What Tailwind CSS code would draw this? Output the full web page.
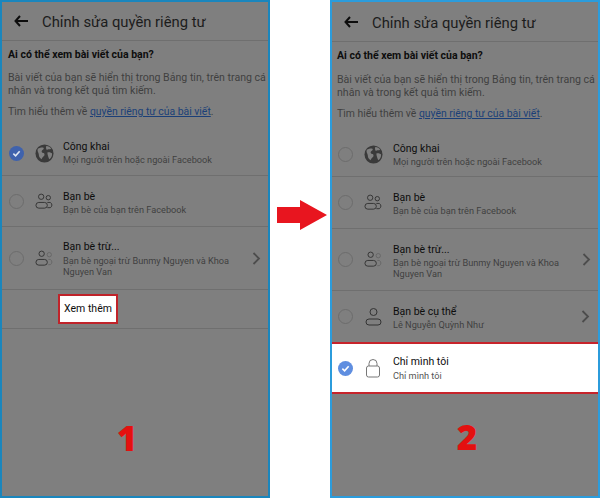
<!DOCTYPE html>
<html lang="vi">
<head>
  <meta charset="UTF-8" />
  <title>Chỉnh sửa quyền riêng tư</title>
  <script src="https://cdn.jsdelivr.net/npm/@tailwindcss/browser@4"></script>
</head>
<body class="bg-white font-['Roboto',sans-serif] overflow-hidden">
  <div class="flex w-[600px] h-[498px]">

    <!-- left phone -->
    <div class="w-[270px] h-[498px] shrink-0 flex flex-col bg-[#7f7f7f] border-2 border-[#1a86bd] text-[#0d0d0d]">
      <div class="h-[39px] shrink-0 flex items-center pl-[12px] border-b border-[#6f6f6f]">
        <svg class="w-[14px] h-[12px]" viewBox="0 0 14 12"><path d="M6 1 1.500 6 6 11M2 6h12" fill="none" stroke="#0d0d0d" stroke-width="2"/></svg>
        <span class="ml-[14px] pt-[2px] text-[14.800px] leading-none text-[#1c1c1c]">Chỉnh sửa quyền riêng tư</span>
      </div>
      <div class="pl-[6px] pt-[7px] h-[87px] shrink-0">
        <p class="text-[10.500px] leading-[14px] font-bold">Ai có thể xem bài viết của bạn?</p>
        <p class="mt-[9px] text-[10.600px] leading-[13px] text-[#3f3f3f]">Bài viết của bạn sẽ hiển thị trong Bảng tin, trên trang cá nhân và trong kết quả tìm kiếm.</p>
        <p class="mt-[8px] text-[10.400px] leading-[13px] text-[#3f3f3f]">Tìm hiểu thêm về <span class="underline text-[#1b3f78]">quyền riêng tư của bài viết</span>.</p>
      </div>
      <div class="h-[48px] shrink-0 flex items-center border-b border-[#6f6f6f] pt-[3px]">
        <div class="ml-[7px] w-[15px] h-[15px] rounded-full bg-[#3f62ad] flex items-center justify-center">
          <svg class="w-[9px] h-[9px]" viewBox="0 0 10 10"><path d="M1.500 5.200 4 7.500 8.500 2.500" fill="none" stroke="#dfe6f2" stroke-width="1.800"/></svg>
        </div>
        <svg class="ml-[11px] w-[19px] h-[19px]" viewBox="0 0 20 20"><circle cx="10" cy="10" r="9.500" fill="#3a3a3a"/><path d="M3 5c2-1 4-2 6-1 1 2-2 2-2 4s3 1 3 3-2 2-3 5c-2-1-3-3-3-5S2 8 3 5ZM12 2c2 0 4 1 5 3-1 1-3 0-4 1s-2-3-1-4ZM13 9c2-1 4 0 5 1 0 3-1 5-3 6-1-2-2-5-2-7Z" fill="#7f7f7f"/></svg>
        <div class="ml-[9px]">
          <p class="text-[10.500px] leading-[13px]">Công khai</p>
          <p class="text-[9.200px] leading-[13px] text-[#3f3f3f]">Mọi người trên hoặc ngoài Facebook</p>
        </div>
      </div>
      <div class="h-[51px] shrink-0 flex items-center border-b border-[#6f6f6f]">
        <div class="ml-[7px] w-[15px] h-[15px] rounded-full border border-[#6c6c6c]"></div>
        <svg class="ml-[11px] w-[19px] h-[19px]" viewBox="0 0 20 20" fill="none" stroke="#333" stroke-width="1"><circle cx="6.500" cy="5" r="2.800"/><circle cx="14" cy="6" r="2.300"/><rect x="1" y="11" width="12" height="6" rx="3"/><path d="M13 11h3a3 3 0 0 1 0 5.500h-3"/></svg>
        <div class="ml-[9px] pt-[3px]">
          <p class="text-[10.500px] leading-[13px]">Bạn bè</p>
          <p class="text-[9.200px] leading-[13px] text-[#3f3f3f]">Bạn bè của bạn trên Facebook</p>
        </div>
      </div>
      <div class="h-[63px] shrink-0 flex items-center border-b border-[#6f6f6f]">
        <div class="ml-[7px] w-[15px] h-[15px] rounded-full border border-[#6c6c6c]"></div>
        <svg class="ml-[11px] w-[19px] h-[19px]" viewBox="0 0 20 20" fill="none" stroke="#333" stroke-width="1"><circle cx="7" cy="5" r="2.800"/><rect x="1" y="11" width="12" height="6" rx="3"/><g stroke="#666"><circle cx="15" cy="6" r="2.300"/><path d="M14 11h2a3 3 0 0 1 0 5.500h-2"/></g></svg>
        <div class="ml-[9px] w-[188px] shrink-0 pt-[1px]">
          <p class="text-[10.500px] leading-[13px]">Bạn bè trừ...</p>
          <p class="text-[9.200px] leading-[11px] text-[#3f3f3f] mt-[2px]">Bạn bè ngoại trừ Bunmy Nguyen và Khoa Nguyen Van</p>
        </div>
        <svg class="ml-[1px] w-[9px] h-[13px]" viewBox="0 0 9 13"><path d="M1.500 1 7 6.500 1.500 12" fill="none" stroke="#4d4d4d" stroke-width="1.800"/></svg>
      </div>
      <div class="h-[39px] shrink-0 flex items-center border-b border-[#6f6f6f] pl-[56px]">
        <div class="w-[60px] h-[30px] bg-white border-2 border-[#c0232a] flex items-center justify-center text-[10.500px]">Xem thêm</div>
      </div>
      <div class="flex-1 flex justify-center pt-[91px]">
        <span class="text-[#e4100f] text-[35px] leading-[36px] font-extrabold font-['Open_Sans',sans-serif] ml-[-16px]">1</span>
      </div>
    </div>

    <!-- arrow between -->
    <div class="w-[60px] shrink-0 flex items-start pt-[200px] pl-[7px]">
      <svg class="w-[50px] h-[30px]" viewBox="0 0 50 30"><path d="M0 7h23V0l27 15-27 15V23H0Z" fill="#e8151f"/></svg>
    </div>

    <!-- right phone -->
    <div class="w-[270px] h-[498px] shrink-0 flex flex-col bg-[#7f7f7f] border-2 border-[#2b9cdc] text-[#0d0d0d]">
      <div class="h-[40px] shrink-0 flex items-center pl-[12px] border-b border-[#6f6f6f]">
        <svg class="w-[14px] h-[12px]" viewBox="0 0 14 12"><path d="M6 1 1.500 6 6 11M2 6h12" fill="none" stroke="#0d0d0d" stroke-width="2"/></svg>
        <span class="ml-[14px] pt-[3px] text-[14.800px] leading-none text-[#1c1c1c]">Chỉnh sửa quyền riêng tư</span>
      </div>
      <div class="pl-[5px] pt-[7px] h-[88px] shrink-0">
        <p class="text-[10.500px] leading-[14px] font-bold">Ai có thể xem bài viết của bạn?</p>
        <p class="mt-[10px] text-[10.600px] leading-[13px] text-[#3f3f3f]">Bài viết của bạn sẽ hiển thị trong Bảng tin, trên trang cá nhân và trong kết quả tìm kiếm.</p>
        <p class="mt-[8px] text-[10.400px] leading-[13px] text-[#3f3f3f]">Tìm hiểu thêm về <span class="underline text-[#1b3f78]">quyền riêng tư của bài viết</span>.</p>
      </div>
      <div class="h-[47px] shrink-0 flex items-center border-b border-[#6f6f6f] pt-[3px]">
        <div class="ml-[6px] w-[15px] h-[15px] rounded-full border border-[#6c6c6c]"></div>
        <svg class="ml-[11px] w-[19px] h-[19px]" viewBox="0 0 20 20"><circle cx="10" cy="10" r="9.500" fill="#3a3a3a"/><path d="M3 5c2-1 4-2 6-1 1 2-2 2-2 4s3 1 3 3-2 2-3 5c-2-1-3-3-3-5S2 8 3 5ZM12 2c2 0 4 1 5 3-1 1-3 0-4 1s-2-3-1-4ZM13 9c2-1 4 0 5 1 0 3-1 5-3 6-1-2-2-5-2-7Z" fill="#7f7f7f"/></svg>
        <div class="ml-[10px]">
          <p class="text-[10.500px] leading-[13px]">Công khai</p>
          <p class="text-[9.200px] leading-[13px] text-[#3f3f3f]">Mọi người trên hoặc ngoài Facebook</p>
        </div>
      </div>
      <div class="h-[52px] shrink-0 flex items-center border-b border-[#6f6f6f]">
        <div class="ml-[6px] w-[15px] h-[15px] rounded-full border border-[#6c6c6c]"></div>
        <svg class="ml-[11px] w-[19px] h-[19px]" viewBox="0 0 20 20" fill="none" stroke="#333" stroke-width="1"><circle cx="6.500" cy="5" r="2.800"/><circle cx="14" cy="6" r="2.300"/><rect x="1" y="11" width="12" height="6" rx="3"/><path d="M13 11h3a3 3 0 0 1 0 5.500h-3"/></svg>
        <div class="ml-[10px] pt-[3px]">
          <p class="text-[10.500px] leading-[13px]">Bạn bè</p>
          <p class="text-[9.200px] leading-[13px] text-[#3f3f3f]">Bạn bè của bạn trên Facebook</p>
        </div>
      </div>
      <div class="h-[62px] shrink-0 flex items-center border-b border-[#6f6f6f]">
        <div class="ml-[6px] w-[15px] h-[15px] rounded-full border border-[#6c6c6c]"></div>
        <svg class="ml-[11px] w-[19px] h-[19px]" viewBox="0 0 20 20" fill="none" stroke="#333" stroke-width="1"><circle cx="7" cy="5" r="2.800"/><rect x="1" y="11" width="12" height="6" rx="3"/><g stroke="#666"><circle cx="15" cy="6" r="2.300"/><path d="M14 11h2a3 3 0 0 1 0 5.500h-2"/></g></svg>
        <div class="ml-[10px] w-[188px] shrink-0 pt-[2px]">
          <p class="text-[10.500px] leading-[13px]">Bạn bè trừ...</p>
          <p class="text-[9.200px] leading-[11px] text-[#3f3f3f] mt-[1px]">Bạn bè ngoại trừ Bunmy Nguyen và Khoa Nguyen Van</p>
        </div>
        <svg class="ml-[1px] w-[9px] h-[13px]" viewBox="0 0 9 13"><path d="M1.500 1 7 6.500 1.500 12" fill="none" stroke="#4d4d4d" stroke-width="1.800"/></svg>
      </div>
      <div class="h-[51px] shrink-0 flex items-center">
        <div class="ml-[6px] w-[15px] h-[15px] rounded-full border border-[#6c6c6c]"></div>
        <svg class="ml-[12px] w-[17px] h-[19px]" viewBox="0 0 17 19" fill="none" stroke="#333" stroke-width="1"><circle cx="8.500" cy="5" r="3.500"/><rect x="1" y="12" width="15" height="6" rx="3"/></svg>
        <div class="ml-[11px] w-[187px] shrink-0 pt-[2px]">
          <p class="text-[10.500px] leading-[13px]">Bạn bè cụ thể</p>
          <p class="text-[9.200px] leading-[13px] text-[#3f3f3f]">Lê Nguyễn Quỳnh Như</p>
        </div>
        <svg class="ml-[1px] w-[9px] h-[13px]" viewBox="0 0 9 13"><path d="M1.500 1 7 6.500 1.500 12" fill="none" stroke="#4d4d4d" stroke-width="1.800"/></svg>
      </div>
      <div class="h-[52px] shrink-0 flex items-center bg-white border-y-2 border-[#c7242b]">
        <div class="ml-[6px] w-[15px] h-[15px] rounded-full bg-[#5f8ee0] flex items-center justify-center">
          <svg class="w-[9px] h-[9px]" viewBox="0 0 10 10"><path d="M1.500 5.200 4 7.500 8.500 2.500" fill="none" stroke="#fff" stroke-width="1.800"/></svg>
        </div>
        <svg class="ml-[13px] w-[14px] h-[19px]" viewBox="0 0 14 19" fill="none" stroke="#777" stroke-width="1"><rect x="0.500" y="7" width="13" height="11" rx="2"/><path d="M3 7V4.500a4 4 0 0 1 8 0V7"/></svg>
        <div class="ml-[13px]">
          <p class="text-[10.500px] leading-[14px]">Chỉ mình tôi</p>
          <p class="text-[9.200px] leading-[13px] text-[#555]">Chỉ mình tôi</p>
        </div>
      </div>
      <div class="flex-1 flex justify-center pt-[25px]">
        <span class="text-[#e4100f] text-[35px] leading-[36px] font-extrabold font-['Open_Sans',sans-serif] ml-[4px]">2</span>
      </div>
    </div>
  </div>
</body>
</html>
